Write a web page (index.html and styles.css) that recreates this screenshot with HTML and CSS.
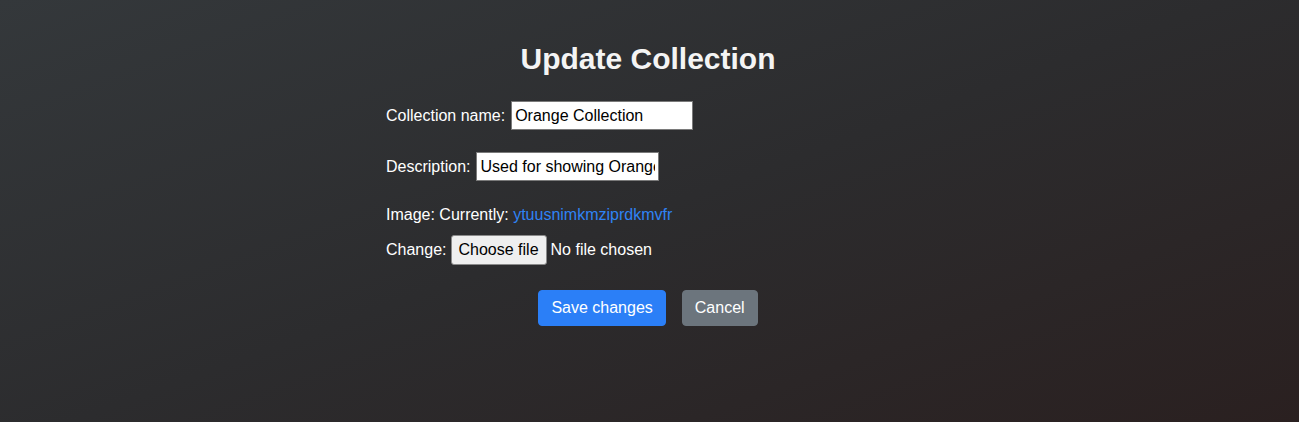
FILE: index.html
```html
<!DOCTYPE html>
<html lang="en">
<head>
<meta charset="utf-8">
<title>Update Collection</title>
<link rel="stylesheet" href="styles.css">
</head>
<body>
<main class="page">
  <h1 class="title">Update Collection</h1>
  <form class="form">
    <div class="row row-field row-name">
      <label class="label" for="name">Collection name:</label>
      <input class="field field-name" id="name" type="text" value="Orange Collection">
    </div>
    <div class="row row-field row-desc">
      <label class="label" for="desc">Description:</label>
      <input class="field field-desc" id="desc" type="text" value="Used for showing Orange items">
    </div>
    <div class="row row-image">
      <span class="label">Image: Currently: <a class="link" href="#">ytuusnimkmziprdkmvfr</a></span>
    </div>
    <div class="row row-change">
      <span class="label">Change:</span>
      <span class="file-btn">Choose file</span>
      <span class="file-text">No file chosen</span>
    </div>
    <div class="actions">
      <button type="button" class="btn btn-primary">Save changes</button>
      <button type="button" class="btn btn-secondary">Cancel</button>
    </div>
  </form>
</main>
</body>
</html>
```
FILE: styles.css
```css
html, body {
  margin: 0;
  height: 100%;
}
body {
  background: linear-gradient(160deg, #34383b 0%, #2c2c2e 50%, #2a2020 100%);
  color: #ffffff;
  font-family: "Liberation Sans", Arial, sans-serif;
  font-size: 16px;
  line-height: 24px;
}
.page {
  display: flex;
  flex-direction: column;
  align-items: center;
  padding-top: 41px;
  padding-right: 3px;
}
.title {
  margin: 0;
  font-size: 30px;
  line-height: 36px;
  font-weight: 700;
  color: #f4f4f4;
}
.form {
  width: 524px;
  display: flex;
  flex-direction: column;
  margin-top: 24px;
}
.row {
  display: flex;
  align-items: center;
  gap: 4px;
}
.row-field { gap: 6px; }
.row-name { height: 29px; }
.row-desc { height: 29px; margin-top: 22px; }
.row-image { height: 24px; margin-top: 22px; }
.row-change { height: 30px; margin-top: 8px; }
.label {
  white-space: nowrap;
}
.field {
  box-sizing: border-box;
  height: 29px;
  border: 1px solid #7a7a7a;
  background: #ffffff;
  color: #000000;
  font-family: "Liberation Sans", Arial, sans-serif;
  font-size: 16px;
  padding: 0 3px;
  margin: 0;
  outline: none;
}
.field-name { width: 182px; }
.field-desc { width: 183px; }
.link {
  color: #2f83f5;
  text-decoration: none;
}
.file-btn {
  box-sizing: border-box;
  height: 30px;
  display: inline-flex;
  align-items: center;
  padding: 0 7px;
  background: #efefef;
  border: 1px solid #8a8a8a;
  border-radius: 3px;
  color: #000000;
}
.file-text {
  color: #ffffff;
}
.actions {
  display: flex;
  justify-content: center;
  gap: 16px;
  margin-top: 25px;
}
.btn {
  box-sizing: border-box;
  height: 36px;
  padding: 0 12px;
  border: 1px solid transparent;
  border-radius: 4px;
  color: #ffffff;
  font-family: "Liberation Sans", Arial, sans-serif;
  font-size: 16px;
  line-height: 24px;
  cursor: pointer;
}
.btn-primary {
  background: #2b7ff7;
  border-color: #2b7ff7;
}
.btn-secondary {
  background: #6c757d;
  border-color: #6c757d;
}
```
